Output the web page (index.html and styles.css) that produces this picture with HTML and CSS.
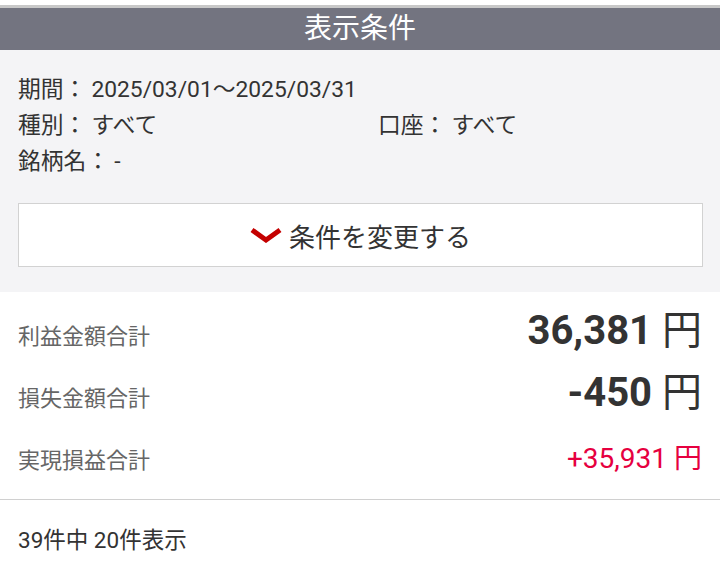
FILE: index.html
```html
<!DOCTYPE html>
<html lang="ja">
<head>
  <meta charset="UTF-8">
  <title>表示条件</title>
  <link rel="stylesheet" href="styles.css">
</head>
<body>

  <div class="page">
    <div class="header">表示条件</div>

    <div class="conditions">
      <div class="cond-row">
        <div><span class="cond-label">期間：</span><span class="cond-value">2025/03/01〜2025/03/31</span></div>
      </div>
      <div class="cond-row cond-two">
        <div><span class="cond-label">種別：</span><span class="cond-value">すべて</span></div>
        <div><span class="cond-label">口座：</span><span class="cond-value">すべて</span></div>
      </div>
      <div class="cond-row">
        <div><span class="cond-label">銘柄名：</span><span class="cond-value">-</span></div>
      </div>

      <button class="change-btn" type="button">
        <svg class="chevron" width="32" height="16" viewBox="0 0 32 16">
          <polyline points="2,3 16,13 30,3" fill="none" stroke="#c40000" stroke-width="5"/>
        </svg>
        条件を変更する
      </button>
    </div>

    <div class="totals">
      <div class="total-row">
        <span class="total-label">利益金額合計</span>
        <span class="total-value big">36,381 <span class="yen">円</span></span>
      </div>
      <div class="total-row">
        <span class="total-label">損失金額合計</span>
        <span class="total-value big">-450 <span class="yen">円</span></span>
      </div>
      <div class="total-row result">
        <span class="total-label">実現損益合計</span>
        <span class="total-value plus">+35,931 <span class="yen">円</span></span>
      </div>
    </div>

    <div class="count">39件中 20件表示</div>
  </div>

</body>
</html>
```

FILE: styles.css
```css
body {
  margin: 0;
  font-family: Roboto, "Noto Sans CJK JP", sans-serif;
  color: #333;
  background: #fff;
}
.page {
  padding-top: 5px;
}
.header {
  border-top: 3px solid #c8c8c8;
  background: #737480;
  color: #fff;
  height: 42px;
  line-height: 42px;
  text-align: center;
  font-size: 28px;
}
.conditions {
  background: #f4f4f6;
  padding: 22px 17px 25px 18px;
}
.cond-row {
  font-size: 22.8px;
  line-height: 36px;
}
.cond-two {
  display: grid;
  grid-template-columns: 360px 1fr;
}
.cond-value {
  margin-left: 5px;
}
.change-btn {
  display: flex;
  align-items: center;
  justify-content: center;
  gap: 7px;
  width: 100%;
  height: 64px;
  margin-top: 23px;
  background: #fff;
  border: 1px solid #d2d2d2;
  font-family: Roboto, "Noto Sans CJK JP", sans-serif;
  font-size: 26px;
  color: #333;
  padding: 0;
}
.chevron {
  display: block;
}
.totals {
  padding: 8px 18px 9px 18px;
  border-bottom: 1px solid #d0d0d0;
}
.total-row {
  display: flex;
  justify-content: space-between;
  align-items: baseline;
  height: 62px;
  line-height: 62px;
}
.total-row.result {
  margin-top: 4px;
}
.total-label {
  font-size: 22px;
  color: #666;
}
.total-value.big {
  font-size: 40px;
  font-weight: bold;
  color: #333;
}
.total-value.big .yen {
  font-weight: normal;
}
.total-value.plus {
  font-size: 28px;
  color: #e6003f;
}
.count {
  font-size: 22.5px;
  padding: 0 18px;
  line-height: 80px;
}
```
